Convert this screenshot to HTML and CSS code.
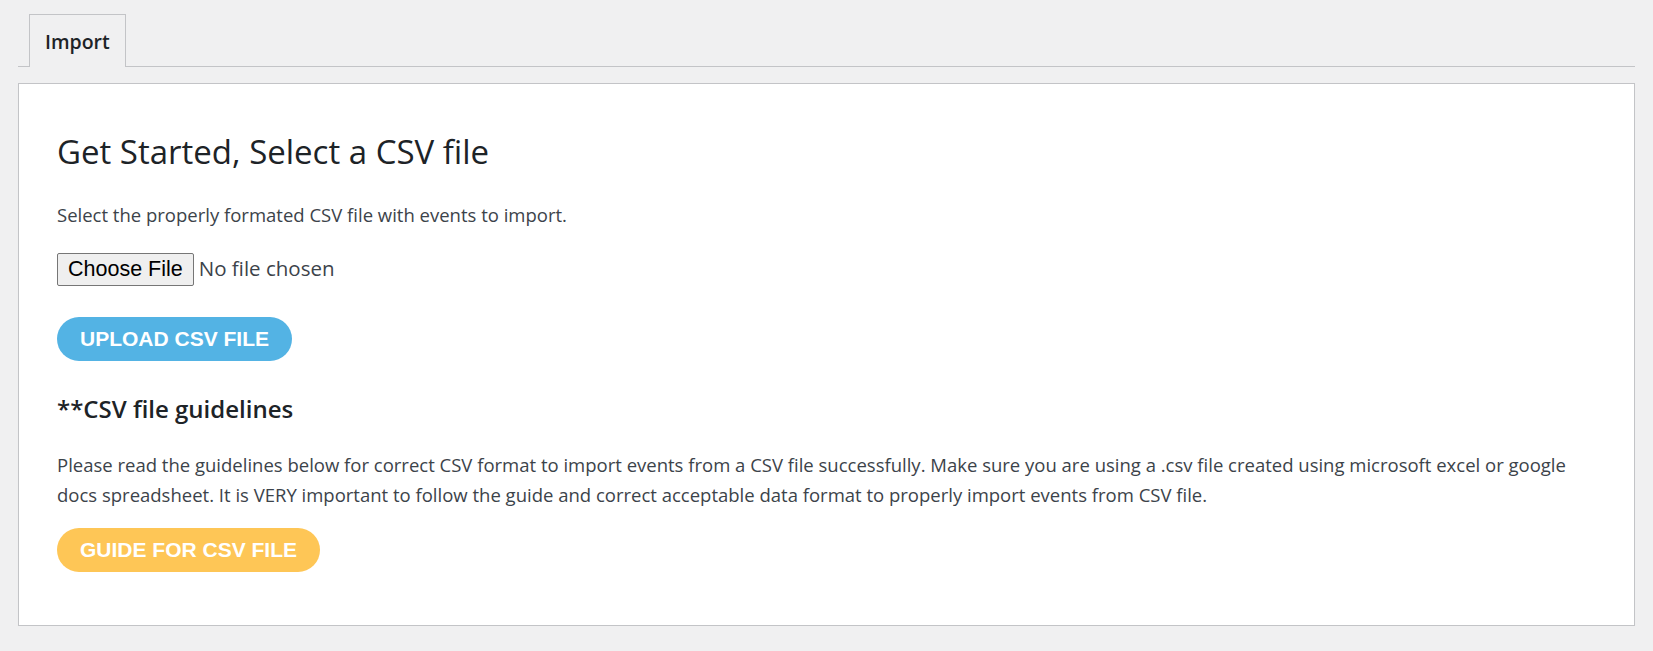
FILE: index.html
```html
<!DOCTYPE html>
<html lang="en">
<head>
<meta charset="utf-8">
<title>Import</title>
<link rel="stylesheet" href="styles.css">
</head>
<body>
<div class="wrap">
  <nav class="tabs">
    <a class="tab active" href="#">Import</a>
  </nav>
  <section class="card">
    <h2 class="title">Get Started, Select a CSV file</h2>
    <p class="text text-intro">Select the properly formated CSV file with events to import.</p>
    <div class="file-row">
      <input class="file" type="file" accept=".csv">
    </div>
    <button class="pill pill-blue" type="button">UPLOAD CSV FILE</button>
    <h3 class="subtitle">**CSV file guidelines</h3>
    <p class="text text-block">Please read the guidelines below for correct CSV format to import events from a CSV file successfully. Make sure you are using a .csv file created using microsoft excel or google docs spreadsheet. It is VERY important to follow the guide and correct acceptable data format to properly import events from CSV file.</p>
    <button class="pill pill-yellow" type="button">GUIDE FOR CSV FILE</button>
  </section>
</div>
</body>
</html>
```
FILE: styles.css
```css
html, body {
  margin: 0;
  padding: 0;
  background: #f0f0f1;
}
body {
  font-family: "Open Sans", "Noto Sans", sans-serif;
  color: #3c434a;
}
.wrap {
  padding: 14px 18px 0 18px;
}
.tabs {
  display: flex;
  padding-left: 11px;
  border-bottom: 1px solid #c3c4c7;
  height: 53px;
  box-sizing: border-box;
}
.tab {
  display: block;
  border: 1px solid #c3c4c7;
  border-bottom: none;
  background: #f0f0f1;
  color: #1d2327;
  text-decoration: none;
  font-weight: 600;
  font-size: 19.5px;
  line-height: 54px;
  padding: 0 15px;
  height: 53px;
  box-sizing: border-box;
  margin-bottom: -1px;
}
.card {
  margin-top: 16px;
  background: #fff;
  border: 1px solid #c3c4c7;
  box-shadow: 0 1px 1px rgba(0,0,0,0.04);
  padding: 46px 38px 55px 38px;
  height: 543px;
  box-sizing: border-box;
}
.title {
  margin: 0;
  font-size: 33px;
  font-weight: 400;
  line-height: 44px;
  color: #1d2327;
}
.text {
  margin: 0;
  font-size: 18.5px;
  line-height: 30px;
  color: #3c434a;
}
.text-intro {
  margin-top: 27px;
  line-height: 28px;
}
.file-row {
  margin-top: 24px;
  height: 33px;
  display: flex;
  align-items: center;
}
.file {
  font-family: "Open Sans", "Noto Sans", sans-serif;
  font-size: 20.5px;
  color: #3c434a;
}
.file::file-selector-button {
  font-family: "Liberation Sans", Arial, sans-serif;
  font-size: 21.5px;
  color: #000;
  background: #efefef;
  border: 1px solid #767676;
  border-radius: 2px;
  height: 33px;
  padding: 0 10px;
  margin-right: 5px;
}
.pill {
  display: block;
  border: none;
  border-radius: 999px;
  color: #fff;
  font-family: "Liberation Sans", Arial, sans-serif;
  font-weight: 700;
  font-size: 21px;
  height: 44px;
  padding: 0 23px;
  cursor: pointer;
}
.pill-blue {
  background: #53b3e4;
  margin-top: 31px;
}
.pill-yellow {
  background: #fec656;
  margin-top: 18px;
}
.subtitle {
  margin: 31px 0 0 0;
  font-size: 24px;
  font-weight: 600;
  line-height: 34px;
  color: #1d2327;
}
.text-block {
  margin-top: 24px;
}
```
